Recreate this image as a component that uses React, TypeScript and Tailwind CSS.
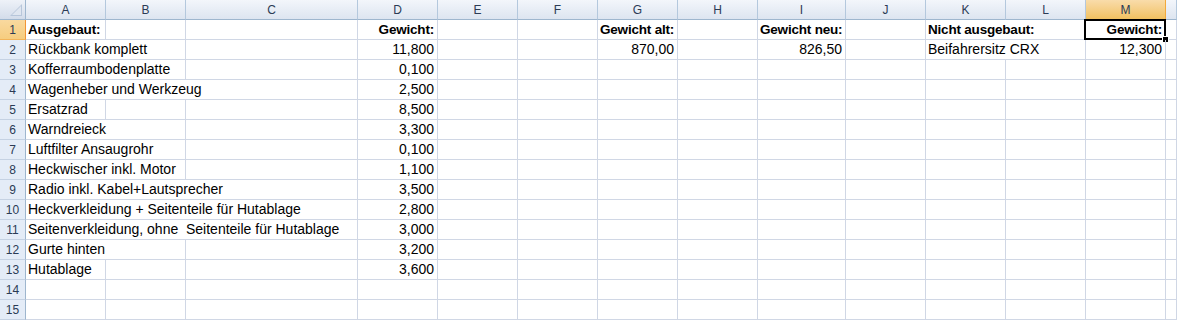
import React from "react";

type Cell = { c: number; t: string; span?: number; bold?: boolean; right?: boolean; sel?: boolean };

const COLS = ["A", "B", "C", "D", "E", "F", "G", "H", "I", "J", "K", "L", "M", ""];

const L = (c: number, t: string, span = 1, bold = false): Cell => ({ c, t, span, bold });
const R = (c: number, t: string, bold = false): Cell => ({ c, t, right: true, bold });

const ROWS: Cell[][] = [
  [L(0, "Ausgebaut:", 1, true), R(3, "Gewicht:", true), R(6, "Gewicht alt:", true), R(8, "Gewicht neu:", true), L(10, "Nicht ausgebaut:", 2, true), { c: 12, t: "Gewicht:", right: true, bold: true, sel: true }],
  [L(0, "Rückbank komplett", 2), R(3, "11,800"), R(6, "870,00"), R(8, "826,50"), L(10, "Beifahrersitz CRX", 2), R(12, "12,300")],
  [L(0, "Kofferraumbodenplatte", 2), R(3, "0,100")],
  [L(0, "Wagenheber und Werkzeug", 3), R(3, "2,500")],
  [L(0, "Ersatzrad", 1), R(3, "8,500")],
  [L(0, "Warndreieck", 2), R(3, "3,300")],
  [L(0, "Luftfilter Ansaugrohr", 2), R(3, "0,100")],
  [L(0, "Heckwischer inkl. Motor", 2), R(3, "1,100")],
  [L(0, "Radio inkl. Kabel+Lautsprecher", 3), R(3, "3,500")],
  [L(0, "Heckverkleidung + Seitenteile für Hutablage", 3), R(3, "2,800")],
  [L(0, "Seitenverkleidung, ohne  Seitenteile für Hutablage", 3), R(3, "3,000")],
  [L(0, "Gurte hinten", 2), R(3, "3,200")],
  [L(0, "Hutablage", 1), R(3, "3,600")],
  [],
  [],
];

function spanClass(n: number) {
  if (n === 3) return "col-span-3";
  if (n === 2) return "col-span-2";
  return "";
}

export default function App() {
  const cells: React.ReactNode[] = [];

  cells.push(
    <div key="corner" className="relative h-[20px] border-r border-b border-[#9eb6ce] bg-gradient-to-b from-[#eef2f8] to-[#d3dcea]">
      <svg className="absolute right-[3px] bottom-[3px]" width="12" height="12" viewBox="0 0 12 12">
        <polygon points="12,0 12,12 0,12" fill="#b7c6da" />
        <polygon points="11,2 11,11 2,11" fill="#dfe6f0" />
      </svg>
    </div>
  );
  COLS.forEach((h, i) => {
    const sel = i === 12;
    cells.push(
      <div
        key={"h" + i}
        className={
          "h-[20px] border-r border-b flex items-center justify-center pt-[1px] text-[12px] text-[#2b3b55] " +
          (sel
            ? "border-r-[#f2a93b] border-b-[#f29536] bg-gradient-to-b from-[#f9dcaa] to-[#f1c15f]"
            : "border-r-[#b4c8dd] border-b-[#9eb6ce] bg-gradient-to-b from-[#f3f6fb] to-[#dde5f0]")
        }
      >
        {h}
      </div>
    );
  });

  ROWS.forEach((row, r) => {
    const selRow = r === 0;
    cells.push(
      <div
        key={"rh" + r}
        className={
          "h-[20px] border-r border-b flex items-center justify-center pt-[1px] text-[12px] text-[#2b3b55] " +
          (selRow
            ? "border-r-[#f29536] border-b-[#f2b45a] bg-gradient-to-b from-[#f9d99f] to-[#f6cd7f]"
            : "border-r-[#9eb6ce] border-b-[#c5d2e3] bg-[#e4ecf7]")
        }
      >
        {r + 1}
      </div>
    );
    let c = 0;
    while (c < COLS.length) {
      const cell = row.find((x) => x.c === c);
      if (cell) {
        const span = cell.span || 1;
        cells.push(
          <div
            key={r + "-" + c}
            className={
              "relative h-[20px] border-r border-b border-[#d0d7e5] px-[2px] leading-[19px] text-black whitespace-pre overflow-visible " +
              spanClass(span) +
              (cell.right ? " text-right pr-[3px]" : " text-left") +
              (cell.bold ? " font-bold text-[13.5px] tracking-[-0.2px]" : " text-[14px]")
            }
          >
            {cell.t}
            {cell.sel && (
              <>
                <div className="absolute -left-[2px] -top-[1px] -right-[1px] -bottom-[1px] border-2 border-black pointer-events-none" />
                <div className="absolute -right-[4px] -bottom-[4px] w-[7px] h-[7px] bg-black border border-white" />
              </>
            )}
          </div>
        );
        c += span;
      } else {
        cells.push(<div key={r + "-" + c} className="h-[20px] border-r border-b border-[#d0d7e5]" />);
        c += 1;
      }
    }
  });

  return (
    <div className="w-[1177px] h-[323px] overflow-hidden bg-white" style={{ fontFamily: '"Liberation Sans", Arial, sans-serif' }}>
      <div className="grid grid-cols-[26px_80px_80px_172px_80px_80px_80px_80px_80px_88px_80px_80px_80px_80px_1fr]">
        {cells}
      </div>
    </div>
  );
}
